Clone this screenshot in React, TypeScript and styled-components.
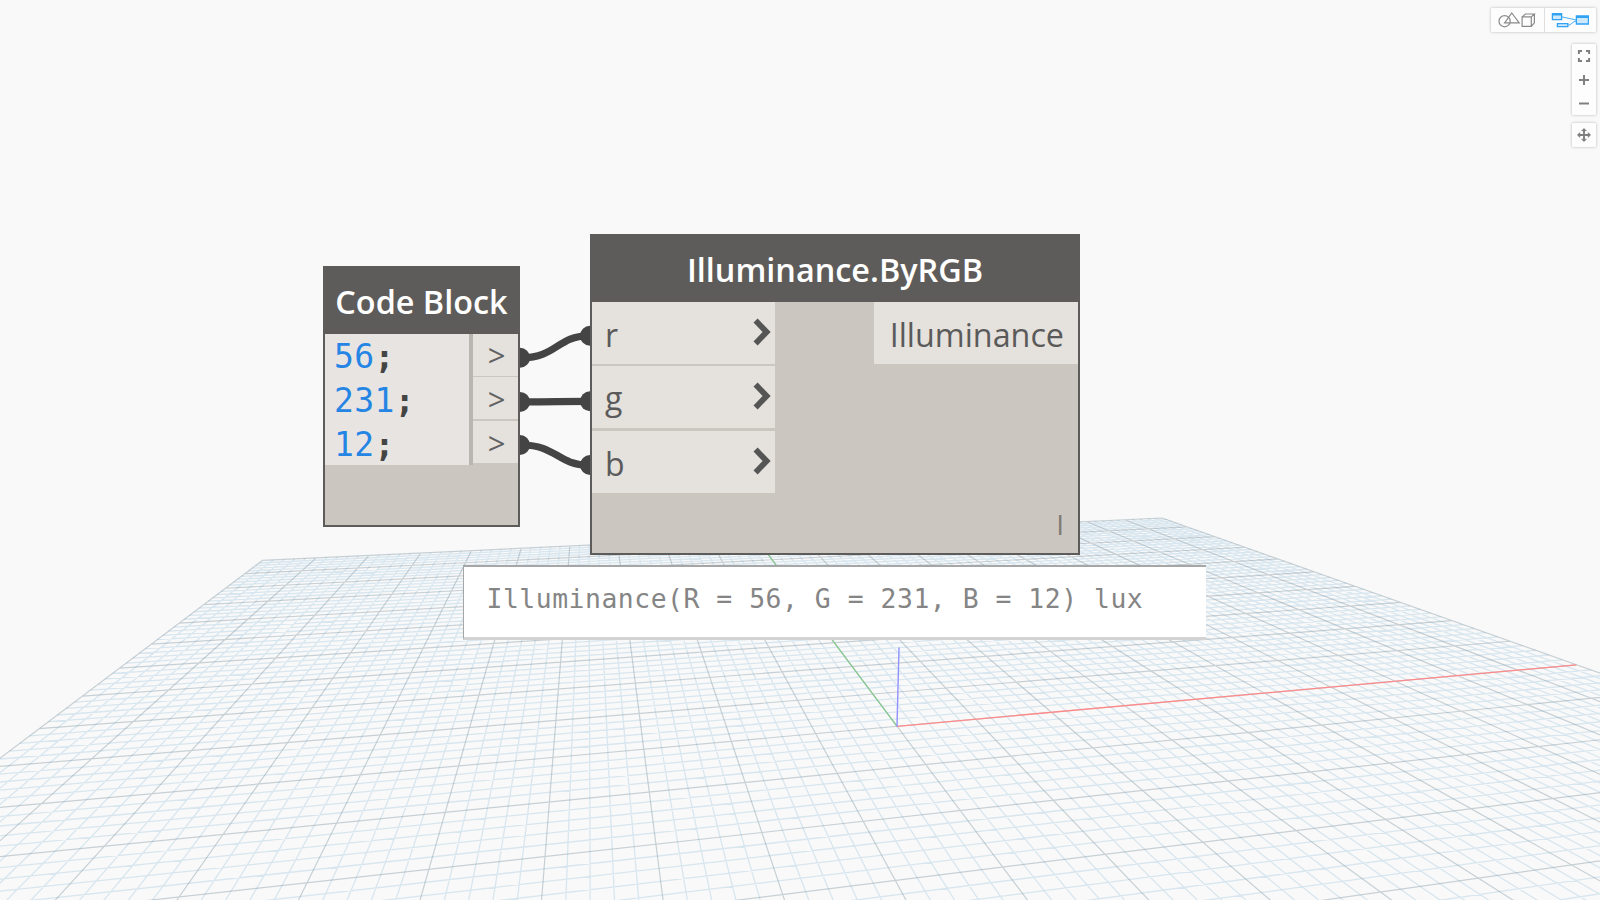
import React from "react";
import styled, { createGlobalStyle } from "styled-components";

const sans = `"Open Sans", "Noto Sans", sans-serif`;
const mono = `"DejaVu Sans Mono", "Liberation Mono", monospace`;

const GlobalStyle = createGlobalStyle`
  * { box-sizing: border-box; }
  body { margin: 0; background: #f9f9f9; overflow: hidden; }
`;

const Workspace = styled.main`
  position: relative;
  width: 1600px;
  height: 900px;
  overflow: hidden;
  background: #f9f9f9;
  font-family: ${sans};
`;

const Layer = styled.svg`
  position: absolute;
  left: 0;
  top: 0;
  display: block;
`;

/* ---------- ground plane ---------- */

const depth = (u: number, v: number) => 1 + 0.017671 * u + 0.084967 * v;

const project = (u: number, v: number): [number, number] => {
  const w = depth(u, v);
  return [
    (95.7977 * u + 49.9845 * v + 897.056) / w,
    (5.601 * u + 26.737 * v + 726.28) / w,
  ];
};

const NEAR = 0.45;

const segment = (a: [number, number], b: [number, number]) => {
  const da = depth(...a);
  const db = depth(...b);
  let start = a;
  if (db < NEAR) return "";
  if (da < NEAR) {
    const t = (NEAR - da) / (db - da);
    start = [a[0] + (b[0] - a[0]) * t, a[1] + (b[1] - a[1]) * t];
  }
  const [x1, y1] = project(...start);
  const [x2, y2] = project(...b);
  return `M${x1.toFixed(2)} ${y1.toFixed(2)}L${x2.toFixed(2)} ${y2.toFixed(2)}`;
};

const gridPath = (major: boolean) => {
  let d = "";
  for (let i = -50; i <= 50; i++) {
    if ((i % 5 === 0) !== major) continue;
    const k = i / 5;
    d += segment([k, -10], [k, 10]);
    d += segment([-10, k], [10, k]);
  }
  return d;
};

const minorGrid = gridPath(false);
const majorGrid = gridPath(true);
const yAxis = segment([0, 0], [0, 10]);
const xAxis = segment([0, 0], [10, 0]);

const Ground = () => (
  <Layer width={1600} height={900} viewBox="0 0 1600 900" fill="none">
    <path d={minorGrid} stroke="#a8cbe0" strokeOpacity={0.4} strokeWidth={1.3} />
    <path d={majorGrid} stroke="#768f9c" strokeOpacity={0.38} strokeWidth={1.2} />
    <path d={yAxis} stroke="#86c78e" strokeWidth={1.3} />
    <path d={xAxis} stroke="#ff8a8a" strokeWidth={1.3} />
    <path d="M897 726.5L899 647.5" stroke="#9292ff" strokeWidth={1.4} />
  </Layer>
);

/* ---------- wires ---------- */

const wires = [
  { from: 357.8, to: 335.8 },
  { from: 401.9, to: 401.3 },
  { from: 445, to: 465 },
];

const Wires = () => (
  <Layer width={1600} height={900} viewBox="0 0 1600 900" fill="none">
    {wires.map(({ from, to }) => (
      <g key={from}>
        <path d={`M522 ${from}C556 ${from} 558 ${to} 588 ${to}`} stroke="#444" strokeWidth={7.2} />
        <circle cx={520} cy={from} r={10} fill="#444" />
        <circle cx={590} cy={to} r={10} fill="#444" />
      </g>
    ))}
  </Layer>
);

/* ---------- nodes ---------- */

const Node = styled.section<{ $x: number; $y: number; $w: number; $h: number }>`
  position: absolute;
  left: ${(p) => p.$x}px;
  top: ${(p) => p.$y}px;
  width: ${(p) => p.$w}px;
  height: ${(p) => p.$h}px;
  display: flex;
  flex-direction: column;
  border: 2px solid #5e5c5a;
  background: #cbc6bf;
`;

const NodeTitle = styled.header<{ $h: number }>`
  flex: none;
  height: ${(p) => p.$h}px;
  display: flex;
  align-items: center;
  justify-content: center;
  background: #5e5c5a;
  color: #fff;
  font-size: 32.4px;
  font-weight: 550;
  line-height: 1;
  white-space: nowrap;
`;

const NodeBody = styled.div`
  display: flex;
  justify-content: space-between;
`;

const Editor = styled.div`
  width: 148px;
  height: 131.5px;
  padding: 1px 0 0 9px;
  background: #e8e4e1;
  border-right: 4px solid #b9b6b1;
  font-family: ${mono};
  font-size: 33px;
  letter-spacing: 0.4px;
  line-height: 44px;
  color: #444;
`;

const Line = styled.div`
  white-space: pre;
`;

const NumberLiteral = styled.span`
  color: #2585e5;
`;

const Terminator = styled.span`
  font-weight: 700;
`;

const PortColumn = styled.div<{ $w: number; $gap: number }>`
  width: ${(p) => p.$w}px;
  display: flex;
  flex-direction: column;
  gap: ${(p) => p.$gap}px;
`;

const CodePort = styled.div`
  height: 42px;
  display: flex;
  align-items: center;
  justify-content: center;
  padding-left: 2px;
  padding-top: 2px;
  background: #e5e1dc;
  color: #626262;
  font-size: 31px;
  font-weight: 400;
  line-height: 1;
`;

const InPort = styled.div<{ $after: number }>`
  height: 62px;
  margin-bottom: ${(p) => p.$after}px;
  display: flex;
  align-items: center;
  justify-content: space-between;
  padding: 3px 4px 0 13px;
  background: #e5e1dc;
  color: #5a5a5a;
  font-size: 32px;
  line-height: 1;

  svg {
    margin-top: -5px;
  }
`;

const OutPort = styled.div`
  width: 204px;
  height: 61.5px;
  display: flex;
  align-items: center;
  justify-content: flex-end;
  padding: 2px 14px 0 0;
  background: #e5e1dc;
  color: #5a5a5a;
  font-size: 32.3px;
  line-height: 1;
`;

const Lacing = styled.footer`
  margin-top: auto;
  padding: 0 14px 15px 0;
  text-align: right;
  color: #7f7b78;
  font-size: 28px;
  font-weight: 500;
  line-height: 28px;
`;

const Chevron = () => (
  <svg width="18" height="28" viewBox="0 0 18 28" fill="none">
    <path d="M2.6 2.6L13.6 14L2.6 25.4" stroke="#555" strokeWidth="5.8" />
  </svg>
);

const Preview = styled.div`
  position: absolute;
  left: 462.5px;
  top: 565px;
  width: 743.5px;
  height: 75px;
  padding: 14px 0 0 23px;
  background: #fff;
  border: solid #a6a6a6;
  border-width: 2px 0 0 1.5px;
  border-bottom: 3px solid #d3d3d3;
  color: #858585;
  font-family: ${mono};
  font-size: 26.4px;
  letter-spacing: 0.53px;
  line-height: 36px;
  white-space: pre;
`;

/* ---------- view controls ---------- */

const Controls = styled.aside`
  position: absolute;
  top: 8px;
  right: 4px;
  display: flex;
  flex-direction: column;
  align-items: flex-end;
`;

const ButtonGroup = styled.div<{ $column?: boolean; $mt?: number }>`
  display: flex;
  flex-direction: ${(p) => (p.$column ? "column" : "row")};
  margin-top: ${(p) => p.$mt ?? 0}px;
  background: #fdfdfd;
  border-radius: 1px;
  box-shadow: 0 0 3px rgba(0, 0, 0, 0.28);
`;

const ControlButton = styled.button<{ $w?: number; $h?: number; $divided?: boolean }>`
  width: ${(p) => p.$w ?? 24.5}px;
  height: ${(p) => p.$h ?? 24}px;
  display: flex;
  align-items: center;
  justify-content: center;
  padding: 0;
  border: 0;
  border-left: ${(p) => (p.$divided ? "1px solid #dedede" : "0")};
  background: none;
`;

const GeometryIcon = () => (
  <svg width="38" height="16" viewBox="0 0 38 16" fill="none" stroke="#8a8a8a" strokeWidth="1.2">
    <circle cx="6.6" cy="9.2" r="5.6" />
    <path d="M13.8 1L21.2 10.8H6.6Z" />
    <path d="M24.1 4.9h9.2v9.4h-9.2zM24.1 4.9L27.4 2h9l-3.1 2.9M36.4 2v8.8l-3.1 3.5" />
  </svg>
);

const GraphIcon = () => (
  <svg width="38" height="16" viewBox="0 0 38 16" fill="#cfe9fc" stroke="#30a3f5" strokeWidth="1.3">
    <path d="M10.6 4.8L25.1 8M17.1 13.2C20.6 13 20.6 10 25.1 9" fill="none" strokeWidth="0.9" />
    <path d="M1.4 1.7h9.2v6h-9.2zM6.4 11.7h10.4v3h-10.4zM25.4 4h12v8h-12z" />
    <path d="M1.4 2.7h9.2M25.4 5h12" strokeWidth="1.8" />
  </svg>
);

const FitIcon = () => (
  <svg width="14" height="14" viewBox="0 0 14 14" fill="none" stroke="#808080" strokeWidth="2">
    <path d="M1.9 5V1.9H5M9 1.9h3.1V5M12.1 9v3.1H9M5 12.1H1.9V9" />
  </svg>
);

const PlusIcon = () => (
  <svg width="12" height="12" viewBox="0 0 12 12" fill="none" stroke="#808080" strokeWidth="2">
    <path d="M6 1v10M1 6h10" />
  </svg>
);

const MinusIcon = () => (
  <svg width="12" height="12" viewBox="0 0 12 12" fill="none" stroke="#808080" strokeWidth="2">
    <path d="M1 5.5h10" />
  </svg>
);

const PanIcon = () => (
  <svg width="16" height="16" viewBox="0 0 16 16" fill="#808080" stroke="#808080" strokeWidth="1.9">
    <path d="M8 2v12M2 8h12" />
    <path
      d="M5.6 3.8L8 1.4l2.4 2.4zM5.6 12.2L8 14.6l2.4-2.4zM3.8 5.6L1.4 8l2.4 2.4zM12.2 5.6L14.6 8l-2.4 2.4z"
      strokeWidth="0.6"
    />
  </svg>
);

const codeLines = ["56", "231", "12"];
const inputs = [
  { name: "r", after: 1.5 },
  { name: "g", after: 3.5 },
  { name: "b", after: 0 },
];

export default function App() {
  return (
    <>
      <GlobalStyle />
      <Workspace>
        <Ground />
        <Wires />

        <Node $x={323} $y={266} $w={197} $h={261}>
          <NodeTitle $h={65.5}>Code Block</NodeTitle>
          <NodeBody>
            <Editor>
              {codeLines.map((value) => (
                <Line key={value}>
                  <NumberLiteral>{value}</NumberLiteral>
                  <Terminator>;</Terminator>
                </Line>
              ))}
            </Editor>
            <PortColumn $w={45} $gap={1.8}>
              {codeLines.map((value) => (
                <CodePort key={value}>&gt;</CodePort>
              ))}
            </PortColumn>
          </NodeBody>
        </Node>

        <Node $x={590} $y={234} $w={490} $h={321}>
          <NodeTitle $h={66}>Illuminance.ByRGB</NodeTitle>
          <NodeBody>
            <PortColumn $w={183} $gap={0}>
              {inputs.map(({ name, after }) => (
                <InPort key={name} $after={after}>
                  {name}
                  <Chevron />
                </InPort>
              ))}
            </PortColumn>
            <OutPort>Illuminance</OutPort>
          </NodeBody>
          <Lacing>I</Lacing>
        </Node>

        <Preview>Illuminance(R = 56, G = 231, B = 12) lux</Preview>

        <Controls>
          <ButtonGroup>
            <ControlButton $w={52.5} aria-label="Geometry view">
              <GeometryIcon />
            </ControlButton>
            <ControlButton $w={52.5} $divided aria-label="Graph view">
              <GraphIcon />
            </ControlButton>
          </ButtonGroup>
          <ButtonGroup $column $mt={12}>
            <ControlButton aria-label="Zoom to fit">
              <FitIcon />
            </ControlButton>
            <ControlButton aria-label="Zoom in">
              <PlusIcon />
            </ControlButton>
            <ControlButton $h={23} aria-label="Zoom out">
              <MinusIcon />
            </ControlButton>
          </ButtonGroup>
          <ButtonGroup $mt={8}>
            <ControlButton aria-label="Pan">
              <PanIcon />
            </ControlButton>
          </ButtonGroup>
        </Controls>
      </Workspace>
    </>
  );
}
